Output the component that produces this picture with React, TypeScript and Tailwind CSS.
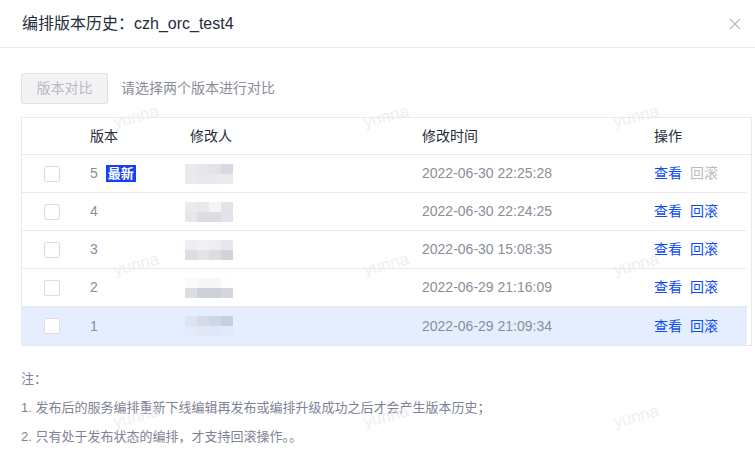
import React from "react";

const FONT = { fontFamily: '"Liberation Sans", "Noto Sans CJK SC", sans-serif' };

type Row = { v: number; latest?: boolean; time: string; canRollback: boolean; active?: boolean; shades: string[] };

const rows: Row[] = [
  { v: 5, latest: true, time: "2022-06-30 22:25:28", canRollback: false, shades: ["#e9e9ee", "#e6e6eb", "#e2e3e8", "#d9dae1", "#ebebef", "#e8e8ed", "#e9e9ee", "#eaeaef"] },
  { v: 4, time: "2022-06-30 22:24:25", canRollback: true, shades: ["#ebebef", "#e8e8ed", "#f5f5f7", "#e3e4e9", "#e6e6eb", "#dcdde3", "#dcdde3", "#e3e4e9"] },
  { v: 3, time: "2022-06-30 15:08:35", canRollback: true, shades: ["#eeeef2", "#f0f0f3", "#eeeef2", "#e6e6eb", "#dcdde3", "#e3e4e9", "#dcdde3", "#d2d3da"] },
  { v: 2, time: "2022-06-29 21:16:09", canRollback: true, shades: ["#fbfbfc", "#f7f7f9", "#f7f7f9", "#fdfdfd", "#dcdde3", "#cfd1d8", "#cfd1d8", "#d6d7de"] },
  { v: 1, time: "2022-06-29 21:09:34", canRollback: true, active: true, shades: ["#dde3ef", "#d3dbeb", "#cdd5e6", "#c6cfe2", "#e3eaf9", "#e1e8f8", "#dfe6f6", "#e2e9f9"] },
];

const marks = [
  [113, 104], [363, 104], [613, 104],
  [113, 252], [363, 252], [613, 252],
  [113, 404], [363, 404], [613, 404],
];

function Mosaic({ shades }: { shades: string[] }) {
  return (
    <div className="grid grid-cols-4 w-[48px] h-[20px]">
      {shades.map((c, i) => (
        <div key={i} style={{ background: c }} />
      ))}
    </div>
  );
}

export default function App() {
  return (
    <div className="relative w-[755px] h-[455px] bg-white overflow-hidden" style={FONT}>
      {/* header */}
      <div className="h-[48px] flex items-center justify-between pl-[22px] pr-[14px] border-b border-[#e8e8f3]">
        <div className="text-[16px] text-[#252b3a]">编排版本历史：czh_orc_test4</div>
        <svg width="12" height="12" viewBox="0 0 12 12" className="mr-[0px]">
          <path d="M1 1 L11 11 M11 1 L1 11" stroke="#b5b7be" strokeWidth="1.1" fill="none" />
        </svg>
      </div>

      <div className="pl-[21px]">
        {/* toolbar */}
        <div className="flex items-center gap-[13px] mt-[25px]">
          <button className="w-[87px] h-[31px] bg-[#f3f3f5] border border-[#dfe1e6] rounded-[2px] text-[14px] text-[#b8bac2]">
            版本对比
          </button>
          <span className="text-[14px] text-[#8a8e99]">请选择两个版本进行对比</span>
        </div>

        {/* table */}
        <div className="mt-[13px] w-[731px] border border-[#e8e8ed] text-[14px]">
          <div className="flex items-center h-[37px] border-b border-[#e8e8ed] text-[#252b3a]">
            <div className="w-[68px]" />
            <div className="w-[100px]">版本</div>
            <div className="w-[232px]">修改人</div>
            <div className="w-[232px]">修改时间</div>
            <div>操作</div>
          </div>
          {rows.map((r, i) => (
            <div
              key={r.v}
              className={`flex items-center h-[38px] w-[725px] ${i < rows.length - 1 ? "border-b border-[#e8e8ed]" : ""} ${r.active ? "bg-[#e5eeff]" : ""}`}
            >
              <div className="w-[68px] pl-[22px]">
                <div className="w-[16px] h-[16px] border border-[#dcdde3] rounded-[2px] bg-white" />
              </div>
              <div className="w-[100px] flex items-center gap-[8px] text-[#8a8e99]">
                <span>{r.v}</span>
                {r.latest && (
                  <span className="h-[17px] px-[2px] flex items-center bg-[#1340fb] text-white text-[13px] font-bold leading-none">
                    最新
                  </span>
                )}
              </div>
              <div className="w-[232px] pl-[-0px]">
                <div className="-ml-[5px]">
                  <Mosaic shades={r.shades} />
                </div>
              </div>
              <div className="w-[232px] text-[#8a8e99]">{r.time}</div>
              <div className="flex gap-[8px]">
                <span className="text-[#0f4cf5]">查看</span>
                <span className={r.canRollback ? "text-[#0f4cf5]" : "text-[#b8bac2]"}>回滚</span>
              </div>
            </div>
          ))}
        </div>

        {/* notes */}
        <div className="mt-[18px] text-[13px] leading-[29px] text-[#7f8396]">
          <div>注：</div>
          <div>1. 发布后的服务编排重新下线编辑再发布或编排升级成功之后才会产生版本历史；</div>
          <div>2. 只有处于发布状态的编排，才支持回滚操作。。</div>
        </div>
      </div>

      {/* watermarks */}
      {marks.map(([x, y], i) => (
        <div
          key={i}
          className="absolute text-[17px] text-[#e9e9ee] opacity-70 pointer-events-none -rotate-[15deg]"
          style={{ left: x, top: y }}
        >
          yunna
        </div>
      ))}
    </div>
  );
}
